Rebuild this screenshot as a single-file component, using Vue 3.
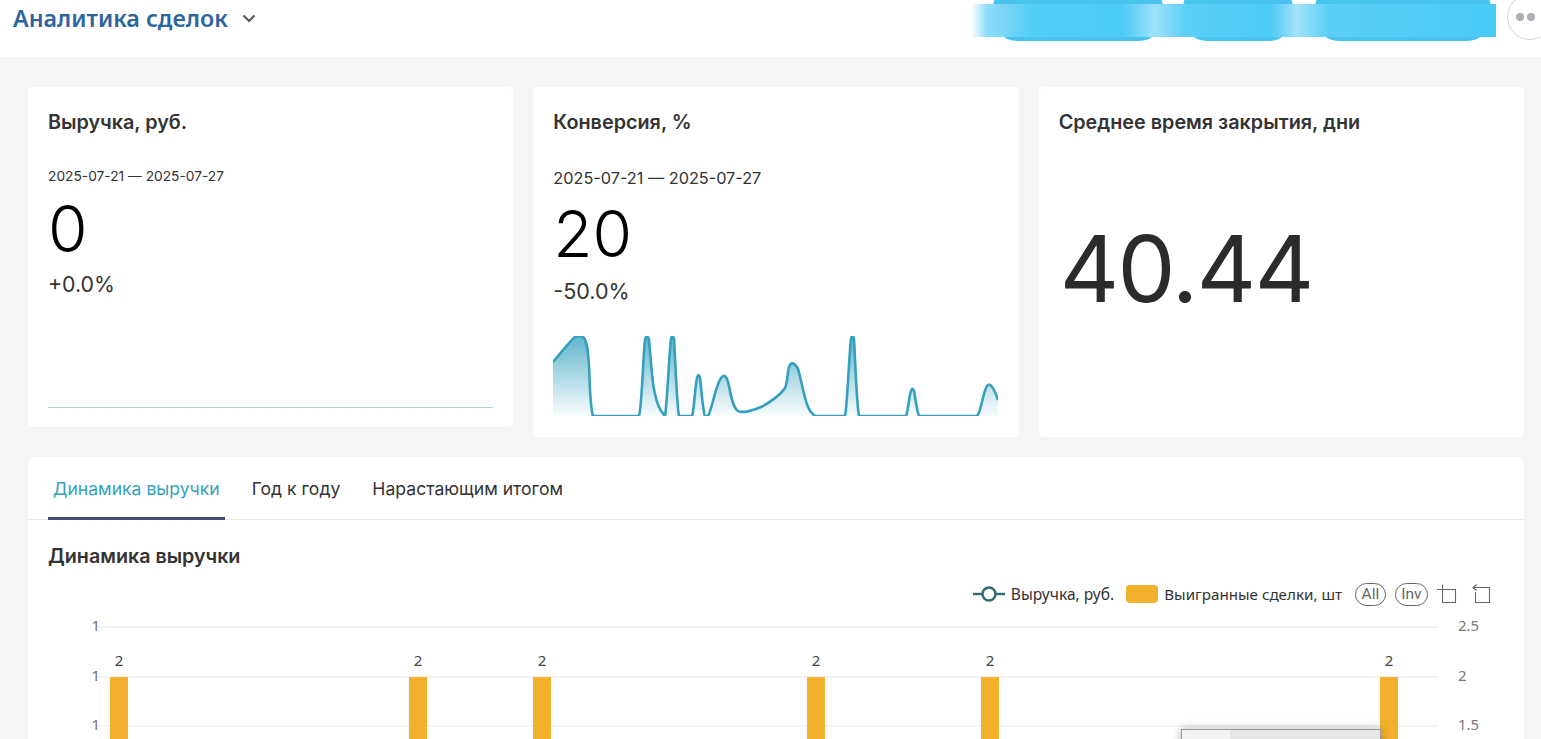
<script setup>
const tabs = ['Динамика выручки', 'Год к году', 'Нарастающим итогом']
const barX = [110, 409, 533, 807, 981, 1380]
const gridY = [627, 677, 726]
const leftLabels = ['1', '1', '1']
const rightLabels = ['2.5', '2', '1.5']

const sparkLine = 'M0,26 C8,17 16,6 22,1 C24,0 28,0 30,1 C34,4 35,14 36,30 C37,52 37,70 40,80 L86,80 C89,70 90,20 92,4 C93,-1 95,-1 96,4 C98,24 99,48 102,58 C104,68 108,76 112,80 C114,70 116,20 118,3 C119,-1 120,-1 121,3 C122,20 124,72 126,80 L139,80 C141,76 142,50 144,42 C145,38 146,38 147,42 C148,50 150,76 152,80 L155,80 C159,74 163,46 169,41 C172,38 174,41 176,50 C178,60 180,72 185,75 C190,78 200,74 208,71 C218,66 228,58 232,52 C235,46 234,38 236,31 C238,25 242,27 245,33 C248,42 251,62 255,71 C257,76 259,78 262,80 L292,80 C294,74 296,20 298,3 C299,-1 300,-1 301,3 C302,20 304,74 306,80 L353,80 C355,76 356,60 358,55 C359,52 360,52 361,55 C362,60 364,76 366,80 L424,80 C428,76 430,56 434,50 C437,46 441,52 445,64'
const sparkFill = sparkLine + ' L445,80 L0,80 Z'
</script>

<template>
   <div class="page">
      <header class="topbar">
         <div class="title-wrap">
            <h1 class="page-title">Аналитика сделок</h1>
            <svg class="chevron" width="14" height="9" viewBox="0 0 14 9">
               <path d="M1.5 1.5 L7 7 L12.5 1.5" fill="none" stroke="#555" stroke-width="2" />
            </svg>
         </div>
         <div class="top-actions">
            <div class="redacted">
               <span class="pill p1"></span>
               <span class="pill p2"></span>
               <span class="pill p3"></span>
               <div class="smear"></div>
            </div>
            <div class="more-btn"><i></i><i></i></div>
         </div>
      </header>

      <main class="content">
         <div class="cards">
            <section class="card card-short">
               <h2 class="card-title">Выручка, руб.</h2>
               <div class="period">2025-07-21 — 2025-07-27</div>
               <div class="value">0</div>
               <div class="delta">+0.0%</div>
               <div class="flat-line"></div>
            </section>

            <section class="card card-tall">
               <h2 class="card-title">Конверсия, %</h2>
               <div class="period period-lg">2025-07-21 — 2025-07-27</div>
               <div class="value value-lg">20</div>
               <div class="delta delta-lg">-50.0%</div>
               <svg class="spark" width="445" height="80" viewBox="0 0 445 80">
                  <defs>
                     <linearGradient id="sparkGrad" x1="0" y1="0" x2="0" y2="1">
                        <stop offset="0" stop-color="#37a2c0" stop-opacity="0.8" />
                        <stop offset="1" stop-color="#37a2c0" stop-opacity="0.03" />
                     </linearGradient>
                  </defs>
                  <path :d="sparkFill" fill="url(#sparkGrad)" />
                  <path :d="sparkLine" fill="none" stroke="#35a0bd" stroke-width="2.6" />
               </svg>
            </section>

            <section class="card card-tall card-big">
               <h2 class="card-title">Среднее время закрытия, дни</h2>
               <div class="big-value">40.44</div>
            </section>
         </div>

         <section class="panel">
            <nav class="tabs">
               <span v-for="(t, i) in tabs" :key="t" class="tab" :class="{ active: i === 0 }">{{ t }}</span>
            </nav>
            <h2 class="chart-title">Динамика выручки</h2>
            <div class="legend">
               <span class="legend-item legend-line">
                  <svg width="32" height="16" viewBox="0 0 32 16">
                     <path d="M0 8H32" stroke="#2f6b6f" stroke-width="2.4" />
                     <circle cx="16" cy="8" r="6.5" fill="#fff" stroke="#2f6b6f" stroke-width="2.4" />
                  </svg>
                  Выручка, руб.
               </span>
               <span class="legend-item">
                  <span class="swatch"></span>
                  Выигранные сделки, шт
               </span>
               <span class="legend-tools">
                  <span class="tool-pill all">All</span>
                  <span class="tool-pill inv">Inv</span>
                  <svg class="crop-icon" width="20" height="20" viewBox="0 0 20 20" fill="none" stroke="#666" stroke-width="1.1">
                     <path d="M5.5 0.5V18.5H18.5V5.5H1M0 5.5H5.5" />
                  </svg>
                  <svg width="20" height="20" viewBox="0 0 20 20" fill="none" stroke="#666" stroke-width="1.1">
                     <path d="M4.5 8V18.5H18.5V3.5H2.5M5.5 0.5L2 3.5L5.5 6.5" />
                  </svg>
               </span>
            </div>
            <svg class="chart" width="1496" height="125" viewBox="28 614 1496 125">
               <line v-for="y in gridY" :key="y" x1="96" x2="1438" :y1="y" :y2="y" stroke="#e6e8ec" stroke-width="1.2" />
               <text v-for="(l, i) in leftLabels" :key="'l' + i" x="100" :y="gridY[i] + 4" text-anchor="end" class="axis">{{ l }}</text>
               <text v-for="(l, i) in rightLabels" :key="'r' + i" x="1458" :y="gridY[i] + 4" class="axis">{{ l }}</text>
               <g v-for="x in barX" :key="x">
                  <rect :x="x" y="677" width="18" height="62" fill="#f3b02c" />
                  <text :x="x + 9" y="666" text-anchor="middle" class="bar-label">2</text>
               </g>
            </svg>
            <div class="chart-tooltip"><span></span></div>
         </section>
      </main>
   </div>
</template>

<style>
html, body {
   margin: 0;
   height: 739px;
   overflow: hidden;
   background: #f5f5f5;
}
</style>

<style scoped>
.page {
   font-family: Inter, "Noto Sans", sans-serif;
   color: #333;
   height: 739px;
   overflow: hidden;
   background: #f5f5f5;
}

/* ── Top bar ── */
.topbar {
   height: 57px;
   background: #fff;
   display: flex;
   justify-content: space-between;
   align-items: flex-start;
   overflow: hidden;
}

.title-wrap {
   display: flex;
   align-items: center;
   gap: 14px;
   padding: 5px 0 0 13px;
}

.page-title {
   margin: 0;
   font-size: 23.3px;
   line-height: 27px;
   font-weight: 600;
   font-family: "Noto Sans", sans-serif;
   color: #2e659d;
}

.top-actions {
   display: flex;
   align-items: flex-start;
   gap: 11px;
   margin-right: -12px;
}

.redacted {
   position: relative;
   width: 525px;
   height: 41px;
   display: flex;
}

.pill {
   position: absolute;
   top: -16px;
   height: 57px;
   border-radius: 24px;
   background: #47c3ee;
}
.p1 { left: 22px; width: 170px; }
.p2 { left: 212px; width: 110px; }
.p3 { left: 344px; width: 176px; }

.smear {
   position: absolute;
   left: 0;
   right: 0;
   top: 4px;
   height: 33px;
   background: linear-gradient(90deg,
      rgba(255, 255, 255, 0.9) 0, #8fdcf8 3%, #52cdf7 12%, #4ccbf7 29%, #9ee1f9 35%, #5ccff7 41%,
      #4ccbf7 57%, #a3e2f9 62%, #5ccff7 68%, #48c9f6 100%);
}

.more-btn {
   width: 46px;
   height: 46px;
   margin-top: -6px;
   border: 1px solid #d4d4d4;
   border-radius: 50%;
   box-sizing: border-box;
   display: flex;
   align-items: center;
   gap: 3px;
   padding-left: 8px;
   background: #fff;
}

.more-btn i {
   width: 8px;
   height: 8px;
   border-radius: 50%;
   background: #aeaeb4;
}

/* ── Content ── */
.content {
   padding: 30px 17px 0 28px;
}

.cards {
   display: grid;
   grid-template-columns: repeat(3, 1fr);
   gap: 20px;
   align-items: start;
}

.card {
   background: #fff;
   border-radius: 5px;
   padding: 0 20px;
   box-sizing: border-box;
}

.card-short { height: 340px; }
.card-tall { height: 350px; }

.card-title {
   margin: 0;
   padding-top: 23px;
   font-size: 19.8px;
   line-height: 24px;
   font-weight: 600;
   color: #333;
}

.period {
   margin-top: 33px;
   font-size: 13.75px;
   line-height: 18px;
}

.period-lg {
   margin-top: 34px;
   font-size: 16.25px;
   line-height: 20px;
}

.value {
   margin-top: 8px;
   font-size: 64px;
   line-height: 72px;
   color: #000;
   font-weight: 300;
}

.value-lg {
   margin-top: 9px;
   line-height: 74px;
}

.delta {
   font-size: 21.3px;
   line-height: 26px;
   margin-top: 6px;
}

.delta-lg {
   font-size: 21.5px;
   margin-top: 7px;
}

.flat-line {
   margin-top: 110px;
   height: 1px;
   background: #a5d5dc;
}

.spark {
   display: block;
   margin-top: 32px;
   overflow: hidden;
}

.big-value {
   margin-top: 81px;
   padding-left: 1px;
   font-size: 92px;
   line-height: 108px;
   letter-spacing: -1.5px;
   font-weight: 400;
   color: #2b2b2b;
}

/* ── Panel ── */
.panel {
   position: relative;
   margin-top: 20px;
   height: 282px;
   background: #fff;
   border-radius: 5px 5px 0 0;
   overflow: hidden;
}

.tabs {
   display: flex;
   height: 62px;
   padding-left: 20px;
   border-bottom: 1px solid #ececec;
}

.tab {
   padding: 0 5px;
   margin-right: 22px;
   height: 60px;
   line-height: 64px;
   font-size: 17.6px;
   color: #333;
   border-bottom: 3px solid transparent;
}

.tab:last-child { margin-right: 0; }

.tab.active {
   color: #37a2bc;
   border-bottom-color: #464d70;
}

.chart-title {
   margin: 0;
   padding: 24px 0 0 20px;
   font-size: 19.7px;
   line-height: 24px;
   font-weight: 600;
}

.legend {
   display: flex;
   justify-content: flex-end;
   align-items: center;
   gap: 12px;
   padding-right: 33px;
   margin-top: 14px;
   height: 24px;
   font-size: 15.2px;
   font-family: "Noto Sans", sans-serif;
   color: #333;
}

.legend-item {
   display: flex;
   align-items: center;
   gap: 6px;
}

.legend-line {
   font-size: 15.6px;
}

.swatch {
   width: 32px;
   height: 18px;
   border-radius: 4px;
   background: #f3b02c;
}

.legend-tools {
   display: flex;
   align-items: center;
   gap: 9px;
   margin-left: 1px;
}

.crop-icon {
   margin-right: 5px;
}

.tool-pill {
   border: 1px solid #666;
   border-radius: 12px;
   height: 21px;
   line-height: 21px;
   padding: 0 5.5px;
   color: #666;
   font-size: 15.5px;
   font-family: Roboto, sans-serif;
}

.chart {
   display: block;
   margin-top: 8px;
}

.axis {
   font-family: "Noto Sans", sans-serif;
   font-size: 15px;
   fill: #777;
}

.bar-label {
   font-family: "Noto Sans", sans-serif;
   font-size: 15px;
   fill: #444;
}

.chart-tooltip {
   position: absolute;
   left: 1153px;
   top: 272px;
   width: 200px;
   height: 20px;
   background: #e6e6e6;
   border: 1px solid #999;
   box-shadow: 0 0 10px rgba(0, 0, 0, 0.3);
   box-sizing: border-box;
}

.chart-tooltip span {
   display: block;
   width: 48px;
   height: 100%;
   background: #f2f2f2;
}
</style>
